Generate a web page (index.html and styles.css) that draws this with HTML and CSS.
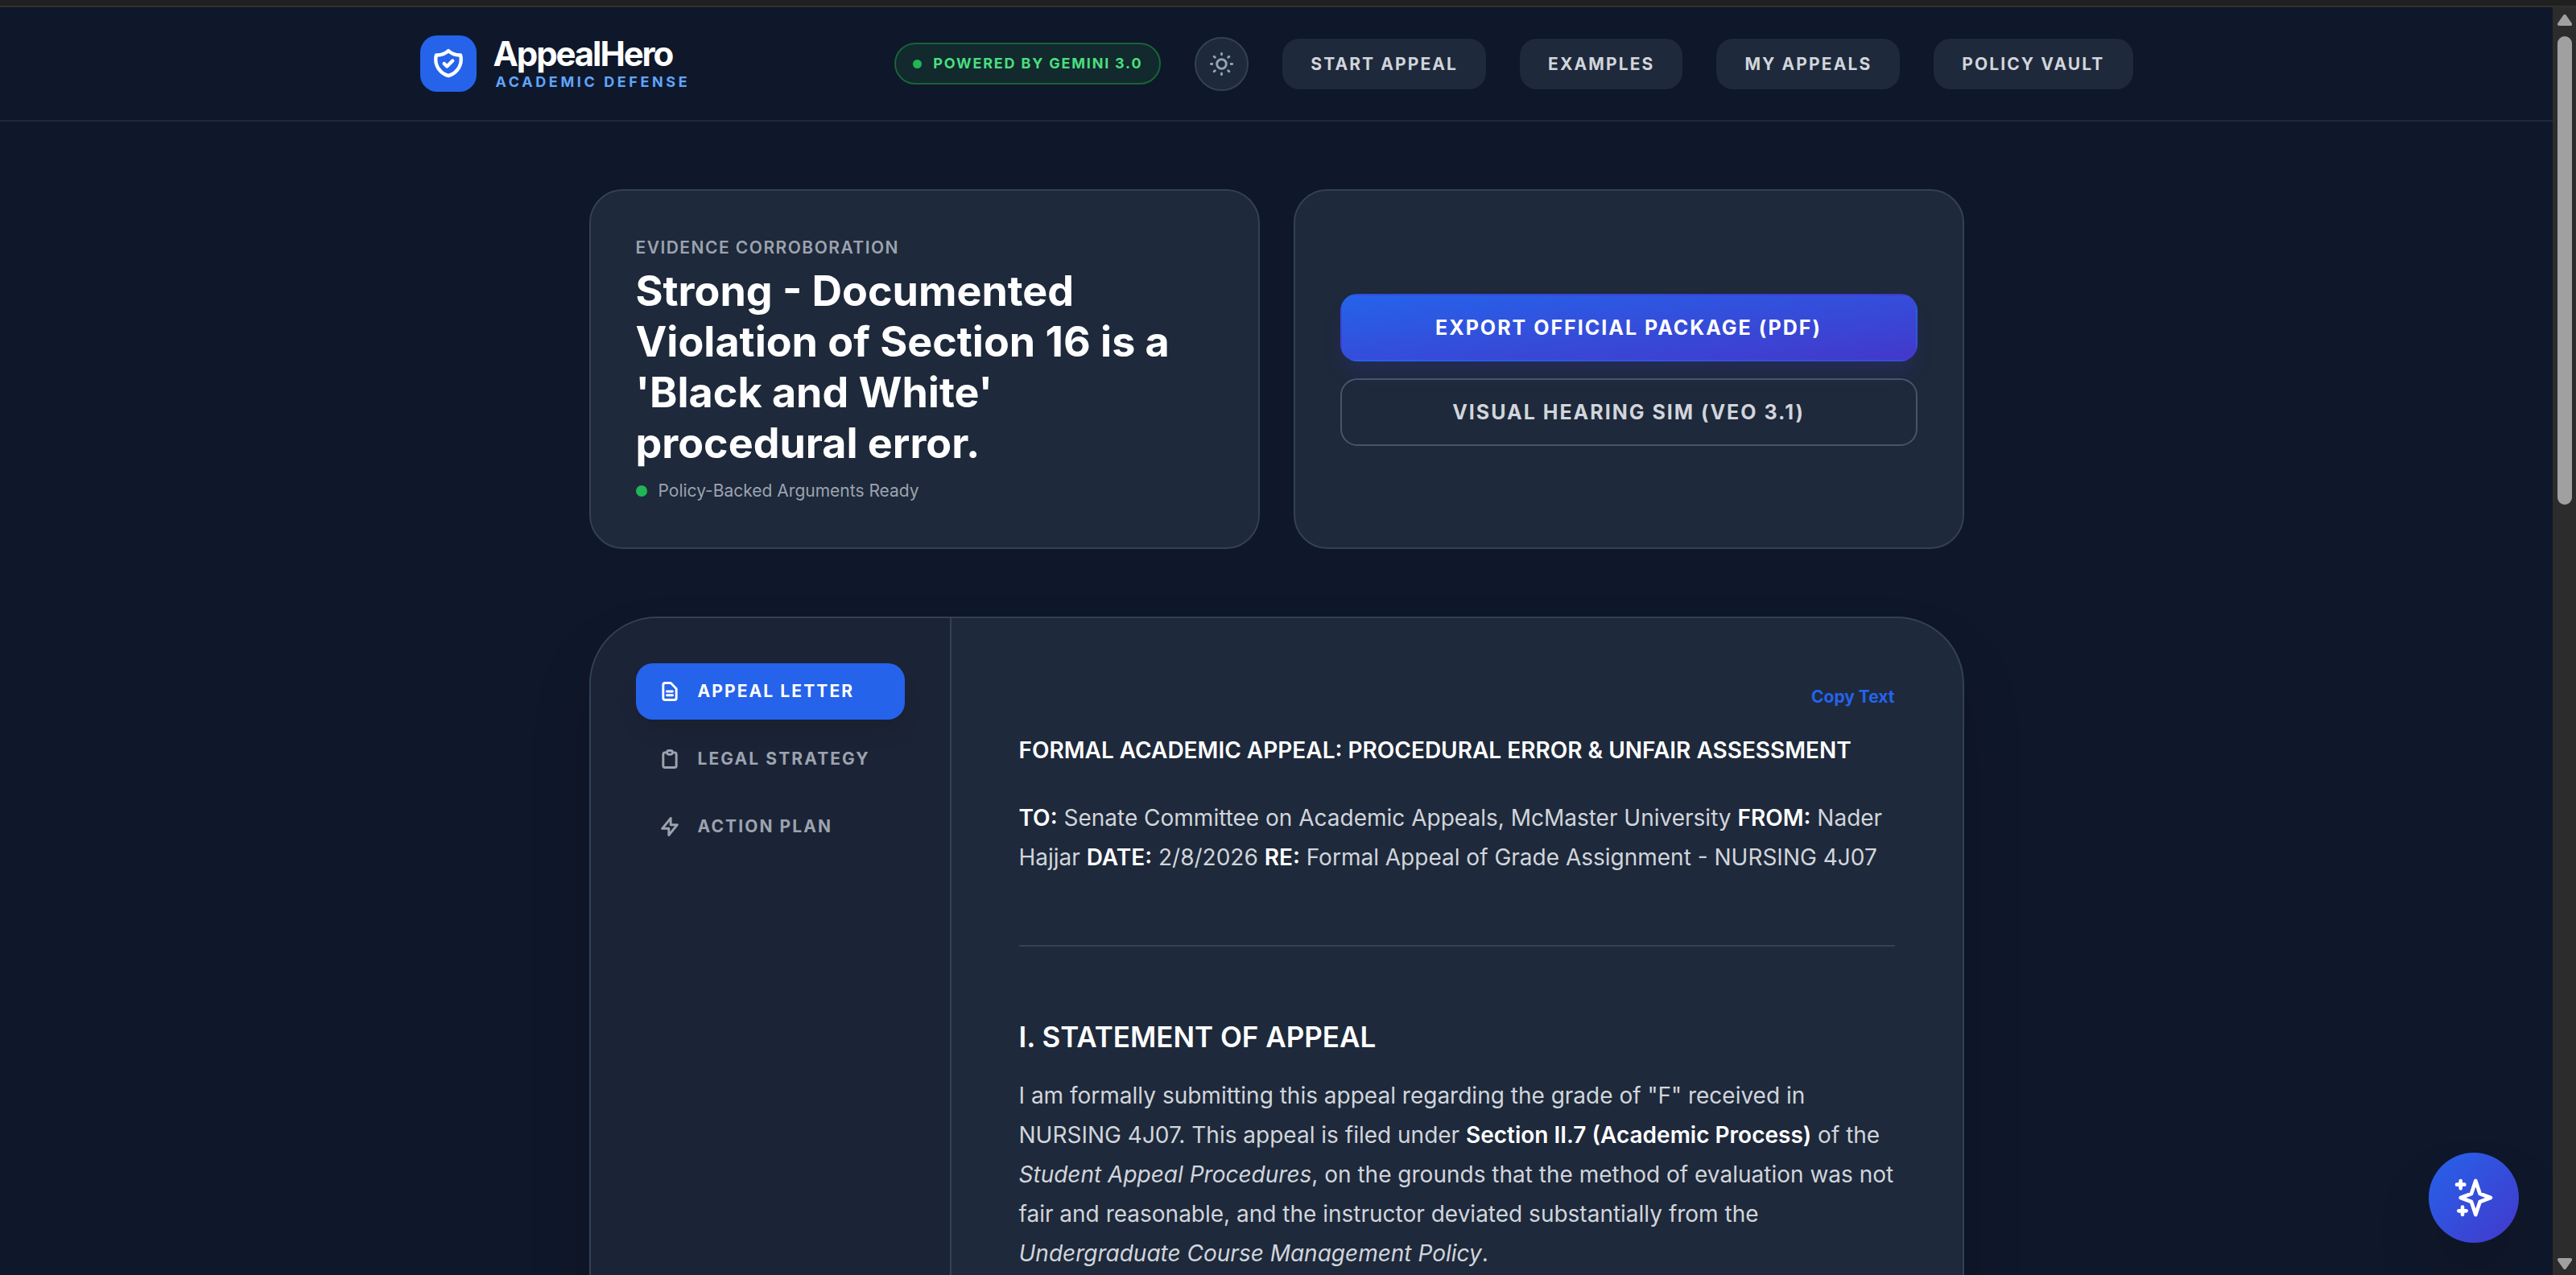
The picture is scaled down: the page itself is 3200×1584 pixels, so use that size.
FILE: index.html
```html
<!DOCTYPE html>
<html lang="en">
<head>
  <meta charset="UTF-8" />
  <meta name="viewport" content="width=device-width, initial-scale=1.0"/>
  <title>AppealHero - Academic Defense</title>
  <link rel="stylesheet" href="styles.css">
</head>
<body>
  <div class="window-edge"></div>

  <div class="window">
    <div class="page">
      <header class="header">
        <div class="header-inner">
          <a href="#" class="brand">
            <span class="brand-logo">
              <svg viewBox="0 0 24 24"><path d="M9 12l2 2 4-4m5.618-4.016A11.955 11.955 0 0112 2.944a11.955 11.955 0 01-8.618 3.04A12.02 12.02 0 003 9c0 5.591 3.824 10.29 9 11.622 5.176-1.332 9-6.03 9-11.622 0-1.042-.133-2.052-.382-3.016z"/></svg>
            </span>
            <span class="brand-text">
              <span class="brand-name">AppealHero</span>
              <span class="brand-tag">ACADEMIC DEFENSE</span>
            </span>
          </a>

          <nav class="nav">
            <div class="powered"><span class="powered-dot"></span>POWERED BY GEMINI 3.0</div>
            <button class="theme-btn" aria-label="Toggle theme">
              <svg viewBox="0 0 24 24"><path d="M12 3v1m0 16v1m9-9h-1M4 12H3m15.364 6.364l-.707-.707M6.343 6.343l-.707-.707m12.728 0l-.707.707M6.343 17.657l-.707.707M16 12a4 4 0 11-8 0 4 4 0 018 0z"/></svg>
            </button>
            <button class="nav-btn">START APPEAL</button>
            <button class="nav-btn">EXAMPLES</button>
            <button class="nav-btn">MY APPEALS</button>
            <button class="nav-btn">POLICY VAULT</button>
          </nav>
        </div>
      </header>

      <main class="content">
        <section class="summary">
          <div class="card">
            <div class="card-label">EVIDENCE CORROBORATION</div>
            <h1 class="card-title">Strong - Documented Violation of Section 16 is a 'Black and White' procedural error.</h1>
            <div class="card-status"><span class="status-dot"></span>Policy-Backed Arguments Ready</div>
          </div>
          <div class="card card-actions">
            <button class="action-btn export">EXPORT OFFICIAL PACKAGE (PDF)</button>
            <button class="action-btn outline">VISUAL HEARING SIM (VEO 3.1)</button>
          </div>
        </section>

        <section class="panel">
          <div class="tabs">
            <button class="tab active">
              <svg viewBox="0 0 24 24"><path d="M9 12h6m-6 4h6m2 5H7a2 2 0 01-2-2V5a2 2 0 012-2h5.586a1 1 0 01.707.293l5.414 5.414a1 1 0 01.293.707V19a2 2 0 01-2 2z"/></svg>
              APPEAL LETTER
            </button>
            <button class="tab">
              <svg viewBox="0 0 24 24"><path d="M9 5H7a2 2 0 00-2 2v12a2 2 0 002 2h10a2 2 0 002-2V7a2 2 0 00-2-2h-2M9 5a2 2 0 002 2h2a2 2 0 002-2M9 5a2 2 0 012-2h2a2 2 0 012 2"/></svg>
              LEGAL STRATEGY
            </button>
            <button class="tab">
              <svg viewBox="0 0 24 24"><path d="M13 10V3L4 14h7v7l9-11h-7z"/></svg>
              ACTION PLAN
            </button>
          </div>

          <div class="document">
            <button class="copy-btn">Copy Text</button>
            <article class="letter">
              <p><strong>FORMAL ACADEMIC APPEAL: PROCEDURAL ERROR &amp; UNFAIR ASSESSMENT</strong></p>
              <p><strong>TO:</strong> Senate Committee on Academic Appeals, McMaster University <strong>FROM:</strong> Nader Hajjar <strong>DATE:</strong> 2/8/2026 <strong>RE:</strong> Formal Appeal of Grade Assignment - NURSING 4J07</p>
              <hr>
              <h3>I. STATEMENT OF APPEAL</h3>
              <p>I am formally submitting this appeal regarding the grade of "F" received in NURSING 4J07. This appeal is filed under <strong>Section II.7 (Academic Process)</strong> of the <em>Student Appeal Procedures</em>, on the grounds that the method of evaluation was not fair and reasonable, and the instructor deviated substantially from the <em>Undergraduate Course Management Policy</em>.</p>
            </article>
          </div>
        </section>
      </main>

      <button class="chat-btn" aria-label="Open assistant">
        <svg viewBox="0 0 24 24"><path d="M5 3v4M3 5h4M6 17v4m-2-2h4m5-16l2.286 6.857L21 12l-5.714 2.143L13 21l-2.286-6.857L5 12l5.714-2.143L13 3z"/></svg>
      </button>
    </div>

    <div class="scrollbar">
      <svg class="arrow" viewBox="0 0 18 14"><path d="M9 2L16 12H2z"/></svg>
      <div class="track"><div class="thumb"></div></div>
      <svg class="arrow" viewBox="0 0 18 14"><path d="M9 12L16 2H2z"/></svg>
    </div>
  </div>
</body>
</html>
```
FILE: styles.css
```css
* {
  box-sizing: border-box;
}

body {
  margin: 0;
  height: 100vh;
  display: flex;
  flex-direction: column;
  overflow: hidden;
  font-family: Inter, "Liberation Sans", sans-serif;
  background: #0f172a;
  color: #fff;
}

button {
  font-family: inherit;
  cursor: pointer;
}

svg {
  display: block;
  fill: none;
  stroke: currentColor;
  stroke-width: 2;
  stroke-linecap: round;
  stroke-linejoin: round;
}

/* Window frame */
.window-edge {
  flex: none;
  height: 9px;
  background: #202020;
  border-bottom: 2px solid #32302d;
}

.window {
  flex: 1;
  min-height: 0;
  display: flex;
}

.page {
  flex: 1;
  position: relative;
  overflow: hidden;
}

.scrollbar {
  width: 29px;
  padding: 9px 5px 7px 6px;
  display: flex;
  flex-direction: column;
  gap: 13px;
  background: #2c2c2c;
  color: #a0a0a0;
}

.arrow {
  flex: none;
  height: 14px;
  fill: currentColor;
  stroke-width: 4;
}

.track {
  flex: 1;
}

.thumb {
  height: 38.7%;
  border-radius: 9px;
  background: #a0a0a0;
}

/* Header */
.header {
  border-bottom: 2px solid #1e293b;
}

.header-inner {
  max-width: 2240px;
  height: 140px;
  margin: 0 auto;
  padding: 0 56px;
  display: flex;
  align-items: center;
  justify-content: space-between;
}

.brand {
  display: flex;
  align-items: center;
  gap: 21px;
  color: #fff;
  text-decoration: none;
}

.brand-logo {
  padding: 14px;
  border-radius: 21px;
  background: #2563eb;
}

.brand-logo svg {
  width: 42px;
  height: 42px;
  stroke-width: 2.5;
}

.brand-text {
  display: flex;
  flex-direction: column;
  gap: 2px;
}

.brand-name {
  font-size: 42px;
  line-height: 44px;
  font-weight: 700;
  letter-spacing: -0.05em;
}

.brand-tag {
  padding-left: 3px;
  font-size: 18px;
  line-height: 22px;
  font-weight: 700;
  letter-spacing: 0.2em;
  color: #60a5fa;
}

.nav {
  display: flex;
  align-items: center;
  gap: 42px;
}

.powered {
  display: flex;
  align-items: center;
  gap: 14px;
  padding: 11px 21px;
  border: 2px solid #166534;
  border-radius: 26px;
  background: #12292d;
  color: #4ade80;
  font-size: 18px;
  line-height: 26px;
  font-weight: 700;
  letter-spacing: 0.1em;
}

.powered-dot {
  width: 11px;
  height: 11px;
  border-radius: 50%;
  background: #22b455;
}

.theme-btn {
  padding: 14px;
  border: 2px solid #334155;
  border-radius: 50%;
  background: #1e293b;
  color: #94a3b8;
}

.theme-btn svg {
  width: 35px;
  height: 35px;
}

.nav-btn {
  padding: 17px 35px;
  border: none;
  border-radius: 21px;
  background: #1e293b;
  color: #d1d5db;
  font-size: 21px;
  line-height: 29px;
  font-weight: 700;
  letter-spacing: 0.1em;
}

/* Summary cards */
.content {
  max-width: 1792px;
  margin: 0 auto;
  padding: 84px 42px;
}

.summary {
  display: grid;
  grid-template-columns: 1fr 1fr;
  gap: 42px;
  margin-bottom: 84px;
}

.card {
  padding: 57px 56px 56px;
  border: 2px solid #334155;
  border-radius: 42px;
  background: #1e293b;
}

.card-label {
  font-size: 21px;
  line-height: 28px;
  font-weight: 600;
  letter-spacing: 0.07em;
  color: #9ca3af;
}

.card-title {
  margin: 8px 0 14px;
  font-size: 52px;
  line-height: 63px;
  font-weight: 700;
}

.card-status {
  display: flex;
  align-items: center;
  gap: 14px;
  font-size: 21px;
  line-height: 28px;
  color: #9ca3af;
}

.status-dot {
  width: 14px;
  height: 14px;
  border-radius: 50%;
  background: #22b455;
}

.card-actions {
  display: flex;
  flex-direction: column;
  justify-content: center;
  gap: 21px;
}

.action-btn {
  padding: 22px;
  border: 2px solid transparent;
  border-radius: 21px;
  font-size: 25px;
  line-height: 36px;
  font-weight: 700;
  letter-spacing: 2px;
}

.export {
  background: linear-gradient(to bottom right, #2563eb, #4338ca);
  color: #fff;
  box-shadow: 0 18px 26px -5px rgba(67, 56, 202, 0.2);
}

.outline {
  border-color: #475569;
  background: none;
  color: #d1d5db;
}

/* Document panel */
.panel {
  display: flex;
  min-height: 1400px;
  border: 2px solid #334155;
  border-radius: 84px;
  overflow: hidden;
  background: #1e293b;
  box-shadow: 0 44px 88px -21px rgba(0, 0, 0, 0.25);
}

.tabs {
  flex: none;
  width: 448px;
  padding: 56px;
  display: flex;
  flex-direction: column;
  gap: 14px;
  border-right: 2px solid #334155;
  background: #1b2336;
}

.tab {
  display: flex;
  align-items: center;
  gap: 21px;
  padding: 21px 28px;
  border: none;
  border-radius: 21px;
  background: none;
  color: #9ca3af;
  font-size: 21px;
  line-height: 28px;
  font-weight: 700;
  letter-spacing: 0.1em;
}

.tab svg {
  width: 28px;
  height: 28px;
  stroke-width: 2.5;
}

.tab.active {
  background: #2563eb;
  color: #fff;
  box-shadow: 0 18px 26px -5px rgba(0, 0, 0, 0.1);
}

.document {
  flex: 1;
  padding: 84px;
  display: flex;
  flex-direction: column;
}

.copy-btn {
  align-self: flex-end;
  margin-bottom: 28px;
  padding: 0;
  border: none;
  background: none;
  color: #2563eb;
  font-size: 21px;
  line-height: 28px;
  font-weight: 700;
}

.letter {
  font-size: 28px;
  line-height: 49px;
  color: #d1d5db;
}

.letter p {
  margin: 0 0 35px;
}

.letter strong {
  font-weight: 600;
  color: #fff;
}

.letter hr {
  margin: 84px 0;
  border: none;
  border-top: 2px solid #374151;
}

.letter h3 {
  margin: 0 0 21px;
  font-size: 35px;
  line-height: 56px;
  font-weight: 600;
  color: #fff;
}

/* Floating assistant button */
.chat-btn {
  position: absolute;
  right: 42px;
  bottom: 40px;
  padding: 28px;
  border: none;
  border-radius: 50%;
  background: linear-gradient(to bottom right, #2563eb, #4338ca);
  color: #fff;
  box-shadow: 0 44px 88px -21px rgba(0, 0, 0, 0.25);
}

.chat-btn svg {
  width: 56px;
  height: 56px;
}
```
